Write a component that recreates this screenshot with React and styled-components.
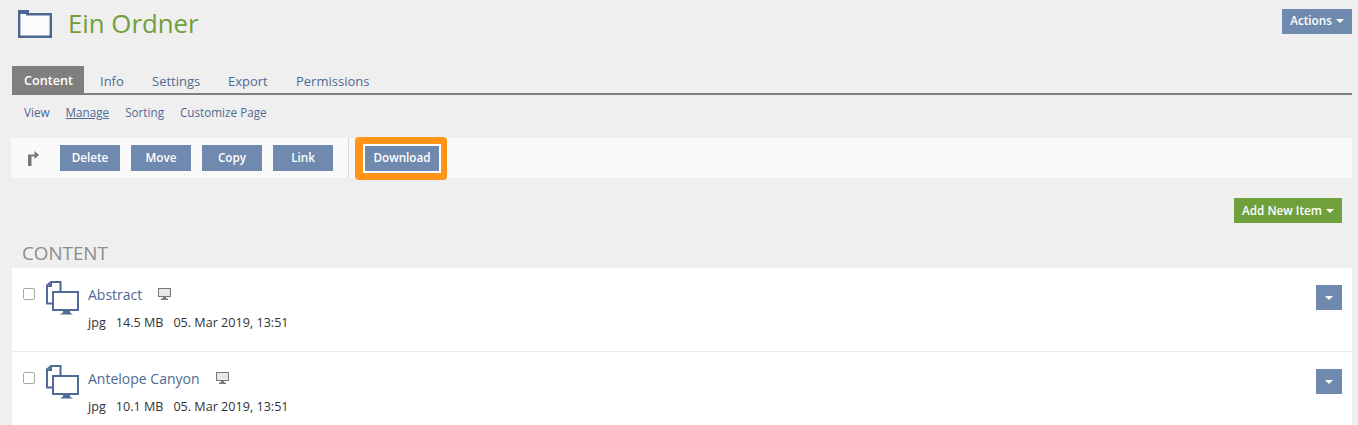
import styled, { createGlobalStyle } from 'styled-components';

const GlobalStyle = createGlobalStyle`
    html, body {
        margin: 0;
        height: 425px;
        overflow: hidden;
        background: #efefef;
        font-family: 'Open Sans', 'Liberation Sans', sans-serif;
    }
`;

const Page = styled.div`
    width: 1358px;
    height: 425px;
    overflow: hidden;
    padding: 0 6px 0 12px;
    box-sizing: border-box;
`;

const Header = styled.header`
    display: flex;
    justify-content: space-between;
    align-items: flex-start;
    height: 66px;
`;

const TitleRow = styled.div`
    display: flex;
    align-items: center;
    gap: 16px;
    padding: 8px 0 0 6px;
`;

const Title = styled.h1`
    margin: -2px 0 0;
    font-size: 25.8px;
    line-height: 34px;
    font-weight: 400;
    color: #6fa03c;
`;

const Button = styled.button`
    display: inline-flex;
    align-items: center;
    justify-content: center;
    gap: 4px;
    box-sizing: border-box;
    width: ${(props) => props.$width || 60}px;
    height: ${(props) => props.$height || 26}px;
    padding: 0 0 2px;
    border: none;
    background: ${(props) => props.$color || '#7089ae'};
    color: #fff;
    font-family: inherit;
    font-size: 11.7px;
    font-weight: 600;
`;

const Caret = styled.span`
    width: 0;
    height: 0;
    margin-top: 2px;
    border-left: 4px solid transparent;
    border-right: 4px solid transparent;
    border-top: 4px solid #fff;
`;

const ActionsWrap = styled.div`
    padding-top: 8px;
`;

const Tabs = styled.nav`
    display: flex;
    gap: 4px;
    height: 27px;
    border-bottom: 2px solid #7f7f7f;
`;

const Tab = styled.a`
    display: flex;
    align-items: center;
    box-sizing: border-box;
    padding: 2px 0 0 12px;
    width: ${(props) => props.$width}px;
    font-size: ${(props) => (props.$active ? 12.6 : 13)}px;
    color: ${(props) => (props.$active ? '#fff' : '#4f6a94')};
    font-weight: ${(props) => (props.$active ? 600 : 400)};
    background: ${(props) => (props.$active ? '#7f7f7f' : 'transparent')};
`;

const SubTabs = styled.nav`
    display: flex;
    gap: 16px;
    padding: 9px 0 0 12px;
    height: 34px;
    box-sizing: border-box;
`;

const SubTab = styled.a`
    font-size: 11.7px;
    line-height: 17px;
    color: #4f6a94;
    text-decoration: ${(props) => (props.$active ? 'underline' : 'none')};
`;

const Toolbar = styled.div`
    display: flex;
    align-items: center;
    height: 40px;
    margin: 9px 0 0 -1px;
    padding-left: 17px;
    background: #f9f9f9;
`;

const ToolButtons = styled.div`
    display: flex;
    gap: 11px;
    margin-left: 21px;
    padding-right: 15px;
    border-right: 1px solid #d9d9d9;
    height: 40px;
    align-items: center;
`;

const Highlight = styled.div`
    display: flex;
    margin-left: 6px;
    padding: 7px 6px 7px 8px;
    border-radius: 4px;
    background: #ff9419;
    position: relative;
    z-index: 1;
`;

const DownloadButton = styled(Button)`
    border: 2px solid #fff;
    box-sizing: content-box;
    width: 74px;
    height: 23px;
`;

const AddRow = styled.div`
    display: flex;
    justify-content: flex-end;
    padding: 20px 10px 0 0;
`;

const SectionTitle = styled.h2`
    margin: 0;
    padding: 17px 0 0 10px;
    height: 28px;
    font-size: 18.8px;
    line-height: 26px;
    font-weight: 500;
    color: #8c8c8c;
    text-transform: uppercase;
`;

const List = styled.ul`
    list-style: none;
    margin: 0;
    padding: 0;
    background: #fff;
`;

const Row = styled.li`
    display: flex;
    height: 84px;
    box-sizing: border-box;
    padding: 14px 10px 0 11px;
    border-bottom: 1px solid #ebebeb;
`;

const Check = styled.span`
    flex: none;
    width: 10px;
    height: 10px;
    margin-top: 6px;
    border: 1px solid #a9a9a9;
    border-radius: 2px;
    background: #fff;
`;

const ItemIcon = styled.svg`
    flex: none;
    margin: -1px 9px 0 11px;
`;

const Info = styled.div`
    flex: 1;
    padding-top: 1px;
`;

const NameRow = styled.div`
    display: flex;
    align-items: center;
    gap: 16px;
    height: 22px;
`;

const Name = styled.a`
    font-size: 14px;
    color: #4f6a94;
`;

const Meta = styled.div`
    display: flex;
    gap: 10px;
    margin-top: 9px;
    font-size: 12.6px;
    line-height: 18px;
    color: #333;
`;

const RowMenu = styled(Button)`
    margin-top: 3px;
`;

function FolderIcon() {
    return (
        <svg width="34" height="28" viewBox="0 0 34 28">
            <path d="M1.2 1.2h8v3h23.6v22.6H1.2z" fill="#fbfbfb" stroke="#4a6791" strokeWidth="2.4" />
            <path d="M0 0h11v4H0z" fill="#4a6791" />
        </svg>
    );
}

function DesktopSmall() {
    return (
        <svg width="13" height="12" viewBox="0 0 13 12">
            <rect x="0.5" y="0.5" width="12" height="8" fill="#e8e8e8" stroke="#777" />
            <path d="M5 9h3v1.5h2V12H3v-1.5h2z" fill="#777" />
        </svg>
    );
}

function ItemGlyph() {
    return (
        <ItemIcon width="33" height="34" viewBox="0 0 33 34">
            <path
                d="M6 22.5H1V4.5L5 1h9.5v9"
                fill="none"
                stroke="#4f6a94"
                strokeWidth="2"
            />
            <path d="M1 6h5V1z" fill="#4f6a94" />
            <rect x="7" y="11" width="25" height="18" fill="#fff" stroke="#4f6a94" strokeWidth="2" />
            <path d="M17 30h7v1.5l3 2H14l3-2z" fill="#4f6a94" />
        </ItemIcon>
    );
}

const items = [
    { name: 'Abstract', type: 'jpg', size: '14.5 MB', date: '05. Mar 2019, 13:51' },
    { name: 'Antelope Canyon', type: 'jpg', size: '10.1 MB', date: '05. Mar 2019, 13:51' },
];

export default function App() {
    return (
        <Page>
            <GlobalStyle />
            <Header>
                <TitleRow>
                    <FolderIcon />
                    <Title>Ein Ordner</Title>
                </TitleRow>
                <ActionsWrap>
                    <Button $width={70} $height={25}>
                        Actions <Caret />
                    </Button>
                </ActionsWrap>
            </Header>
            <Tabs>
                <Tab $active $width={72}>Content</Tab>
                <Tab $width={48}>Info</Tab>
                <Tab $width={72}>Settings</Tab>
                <Tab $width={64}>Export</Tab>
                <Tab $width={100}>Permissions</Tab>
            </Tabs>
            <SubTabs>
                <SubTab>View</SubTab>
                <SubTab $active>Manage</SubTab>
                <SubTab>Sorting</SubTab>
                <SubTab>Customize Page</SubTab>
            </SubTabs>
            <Toolbar>
                <svg width="11" height="15" viewBox="0 0 11 15">
                    <path d="M0 15V3.5h6.5V0L11 4 6.5 8V5.5H3.5V15z" fill="#777" />
                </svg>
                <ToolButtons>
                    <Button>Delete</Button>
                    <Button>Move</Button>
                    <Button>Copy</Button>
                    <Button>Link</Button>
                </ToolButtons>
                <Highlight>
                    <DownloadButton>Download</DownloadButton>
                </Highlight>
            </Toolbar>
            <AddRow>
                <Button $width={108} $height={25} $color="#6fa03c">
                    Add New Item <Caret />
                </Button>
            </AddRow>
            <SectionTitle>Content</SectionTitle>
            <List>
                {items.map((item) => (
                    <Row key={item.name}>
                        <Check />
                        <ItemGlyph />
                        <Info>
                            <NameRow>
                                <Name>{item.name}</Name>
                                <DesktopSmall />
                            </NameRow>
                            <Meta>
                                <span>{item.type}</span>
                                <span>{item.size}</span>
                                <span>{item.date}</span>
                            </Meta>
                        </Info>
                        <RowMenu $width={26} $height={25}>
                            <Caret />
                        </RowMenu>
                    </Row>
                ))}
            </List>
        </Page>
    );
}
